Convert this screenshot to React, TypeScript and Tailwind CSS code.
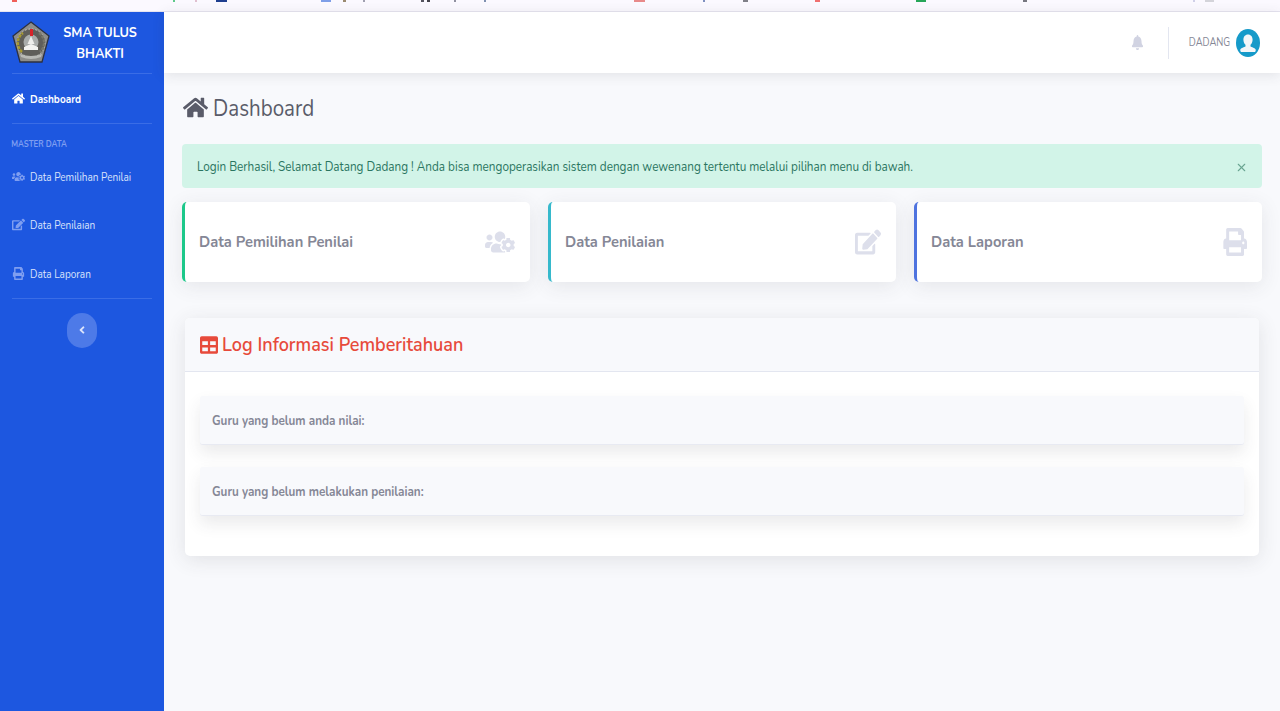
import React from "react";
import { FaHome, FaUsersCog, FaEdit, FaPrint, FaTable, FaBell, FaAngleLeft } from "react-icons/fa";
import { X } from "lucide-react";

const font = "font-['Nunito','Noto_Sans','Lato',sans-serif]";

function Crest() {
  return (
    <svg width="38" height="44" viewBox="0 0 38 44" className="shrink-0">
      <polygon points="19,1 37,15 30,41 8,41 1,15" fill="#8d8d8a" stroke="#2c3040" strokeWidth="1.3" />
      <circle cx="19" cy="22" r="14" fill="#5f5e5a" />
      <circle cx="19" cy="22" r="14" fill="none" stroke="#cfcfcb" strokeWidth="1" strokeDasharray="1.500 2" />
      <path d="M10 31 A12 12 0 0 1 11 12" fill="none" stroke="#a89a30" strokeWidth="2.500" strokeDasharray="3 1" />
      <path d="M27 12 A12 12 0 0 1 28 31" fill="none" stroke="#77766a" strokeWidth="2.500" strokeDasharray="3 1" />
      <circle cx="19" cy="21" r="7.500" fill="#a9acab" />
      <rect x="18" y="8" width="3" height="7" fill="#d8232a" />
      <path d="M12 26 L19 23 L26 26 L26 29 L12 29 Z" fill="#f2f2f0" />
      <path d="M15.500 23 L19 15 L22.500 23 Z" fill="#eeeeec" />
      <path d="M8 33 Q19 37 30 33 L29 36 Q19 40 9 36 Z" fill="#b9bab6" />
    </svg>
  );
}

function Avatar() {
  return (
    <svg width="24" height="28" viewBox="0 0 24 28">
      <ellipse cx="12" cy="14" rx="12" ry="14" fill="#169ac9" />
      <path d="M12 5.500c-3 0-4.600 2.300-4.600 5.200 0 2.200 1 4 2.100 5.100v1.600c-1 .9-4.600 1.200-5.200 3-.2.800 0 1.800.6 2.600h14.200c.6-.8.8-1.800.6-2.600-.6-1.800-4.200-2.100-5.200-3v-1.600c1.100-1.100 2.100-2.900 2.100-5.100 0-2.900-1.600-5.200-4.600-5.200z" fill="#f4f6f8" />
    </svg>
  );
}

function NavItem({ icon, label }: { icon: React.ReactNode; label: string }) {
  return (
    <div className="flex items-center h-[48.500px] pl-3">
      <span className="w-[18px] flex justify-start text-[13px] text-[#7f9ef0]">{icon}</span>
      <span className="text-[12px] pt-px text-[#dbe4fb] inline-block origin-left scale-x-[0.835] whitespace-nowrap">{label}</span>
    </div>
  );
}

function Card({ title, icon, border }: { title: string; icon: React.ReactNode; border: string }) {
  return (
    <div className={`bg-white rounded-[5px] border-l-[3px] ${border} h-[80px] flex items-center justify-between pl-[14px] pr-[14px] shadow-[0_4px_20px_rgba(58,59,69,0.10)]`}>
      <span className="text-[16px] font-bold text-[#858796] inline-block origin-left scale-x-[0.917] whitespace-nowrap">{title}</span>
      {icon}
    </div>
  );
}

function Panel({ text }: { text: string }) {
  return (
    <div className="bg-[#f8f9fc] h-[49px] flex items-center pl-3 border-b border-[#e8eaf2] rounded-[3px] shadow-[0_8px_16px_rgba(58,59,69,0.10)]">
      <span className="text-[13px] pt-[3px] font-bold text-[#858796] inline-block origin-left scale-x-[0.9] whitespace-nowrap">{text}</span>
    </div>
  );
}

const marks: [number, number, string][] = [
  [12, 5, "#f0605a"], [173, 2, "#5fc98a"], [195, 2, "#e0c0d0"], [216, 11, "#1f3f8f"], [321, 10, "#7f9fe8"],
  [343, 3, "#9a8a70"], [363, 2, "#a0a0b0"], [421, 3, "#555560"], [427, 3, "#44444c"], [454, 2, "#9090a0"],
  [484, 2, "#7f90b0"], [634, 11, "#e88a8a"], [703, 2, "#7f90c0"], [743, 5, "#808088"], [815, 5, "#f07070"],
  [916, 10, "#27a659"], [1023, 4, "#777780"], [1193, 2, "#d0d0e8"], [1205, 9, "#d4d4da"],
];

export default function App() {
  return (
    <div className={`w-[1280px] h-[711px] overflow-hidden flex flex-col bg-[#f8f9fc] ${font}`}>
      <div className="h-3 shrink-0 bg-[#fbf9ff] border-b border-[#e6e4f0]">
        <svg width="1280" height="3" className="block">
          {marks.map(([x, w, c]) => (
            <rect key={x} x={x} y="0" width={w} height="2" fill={c} />
          ))}
        </svg>
      </div>
      <div className="flex flex-1 min-h-0">
        <aside className="w-[164px] shrink-0 bg-[#1d57e0] flex flex-col">
          <div className="h-[62px] mx-3 flex items-center border-b border-[#3a6de6]">
            <Crest />
            <div className="flex-1 text-center text-white font-bold text-[14px] leading-[21px] pr-[2px] scale-x-[0.91]">SMA TULUS<br />BHAKTI</div>
          </div>
          <div className="h-[49px] flex items-center pl-3">
            <span className="w-[18px] text-white text-[13px]"><FaHome /></span>
            <span className="text-[12px] pt-px font-bold text-white inline-block origin-left scale-x-[0.835]">Dashboard</span>
          </div>
          <div className="mx-3 border-t border-[#3a6de6]" />
          <div className="pl-[13px] pt-[15px] text-[9px] font-bold text-[#7f9ef0] leading-[10px] origin-left scale-x-[0.87]">MASTER DATA</div>
          <div className="pt-[3px]">
            <NavItem icon={<FaUsersCog />} label="Data Pemilihan Penilai" />
            <NavItem icon={<FaEdit />} label="Data Penilaian" />
            <NavItem icon={<FaPrint className="scale-x-[0.9]" />} label="Data Laporan" />
          </div>
          <div className="mx-3 border-t border-[#3a6de6]" />
          <div className="flex justify-center pt-[14px]">
            <div className="w-[30px] h-[35px] rounded-full bg-[#4d7ae8] flex items-center justify-center text-[#dbe4fb] text-[12px]"><FaAngleLeft /></div>
          </div>
        </aside>
        <main className="flex-1 min-w-0 flex flex-col">
          <header className="h-[61px] shrink-0 bg-white flex items-center justify-end pr-[20px] shadow-[0_2px_12px_rgba(58,59,69,0.12)]">
            <span className="text-[#d1d3e2] text-[15px] mr-[23px]"><FaBell className="scale-x-[0.85]" /></span>
            <div className="w-px h-[32px] bg-[#e3e6f0] mr-[20px]" />
            <span className="text-[11px] pt-[2px] text-[#858796] mr-[6px] inline-block origin-right scale-x-[0.86] -ml-[7px]">DADANG</span>
            <Avatar />
          </header>
          <div className="px-[18px] pt-[20px]">
            <h1 className="flex items-center gap-[5px] text-[24px] leading-[30px] text-[#5a5c69]">
              <FaHome className="text-[25px] shrink-0 -mt-[2px] ml-px" />
              <span className="inline-block origin-left scale-x-[0.856] whitespace-nowrap">Dashboard</span>
            </h1>
            <div className="mt-[21px] h-[44px] bg-[#d2f4e8] rounded-[4px] flex items-center justify-between pl-[15px] pr-[14px] text-[#2a7560]">
              <span className="text-[13px] pt-[3px] inline-block origin-left scale-x-[0.903] whitespace-nowrap">Login Berhasil, Selamat Datang Dadang ! Anda bisa mengoperasikan sistem dengan wewenang tertentu melalui pilihan menu di bawah.</span>
              <X size={13} strokeWidth={2} className="text-[#6aa592] mt-[2px]" />
            </div>
            <div className="mt-[14px] grid grid-cols-3 gap-[18px]">
              <Card title="Data Pemilihan Penilai" icon={<FaUsersCog className="text-[#dddfeb] text-[30px] mr-px" />} border="border-[#1cc88a]" />
              <Card title="Data Penilaian" icon={<FaEdit className="text-[#dddfeb] text-[28px] scale-x-[0.93]" />} border="border-[#36b9cc]" />
              <Card title="Data Laporan" icon={<FaPrint className="text-[#dddfeb] text-[28px] scale-x-[0.85] origin-right mr-px" />} border="border-[#4e73df]" />
            </div>
            <section className="mt-[36px] mx-[3px] h-[238px] bg-white rounded-[5px] shadow-[0_4px_20px_rgba(58,59,69,0.12)] overflow-hidden">
              <div className="h-[54px] bg-[#f8f9fc] border-b border-[#e3e6f0] flex items-center pl-[15px] gap-[2px] text-[#e74a3b]">
                <FaTable className="text-[20px] scale-x-[0.9] origin-left shrink-0" />
                <span className="text-[20px] pt-px font-semibold inline-block origin-left scale-x-[0.9] whitespace-nowrap">Log Informasi Pemberitahuan</span>
              </div>
              <div className="px-[15px] pt-[24px] flex flex-col gap-[22px]">
                <Panel text="Guru yang belum anda nilai:" />
                <Panel text="Guru yang belum melakukan penilaian:" />
              </div>
            </section>
          </div>
        </main>
      </div>
    </div>
  );
}
